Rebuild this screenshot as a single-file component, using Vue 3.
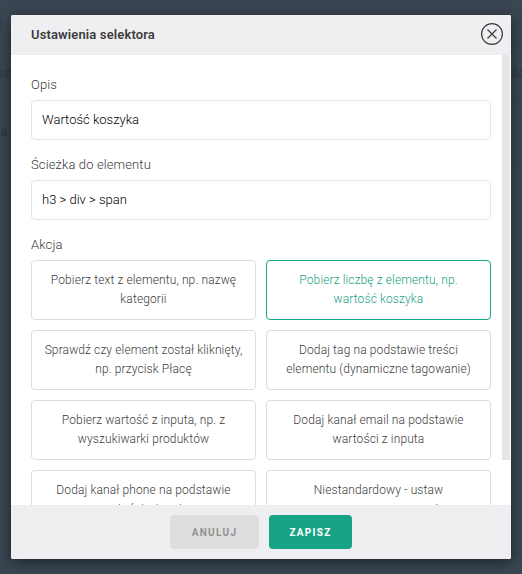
<script setup>
const options = [
  { text: 'Pobierz text z elementu, np. nazwę kategorii' },
  { text: 'Pobierz liczbę z elementu, np. wartość koszyka', active: true },
  { text: 'Sprawdź czy element został kliknięty, np. przycisk Płacę' },
  { text: 'Dodaj tag na podstawie treści elementu (dynamiczne tagowanie)' },
  { text: 'Pobierz wartość z inputa, np. z wyszukiwarki produktów' },
  { text: 'Dodaj kanał email na podstawie wartości z inputa' },
  { text: 'Dodaj kanał phone na podstawie wartości z inputa' },
  { text: 'Niestandardowy - ustaw zaawansowane parametry' },
]
</script>

<template>
  <div class="screen">
    <div class="page">
      <div class="row first"><b>n</b></div>
      <div class="row"><span class="cut">sc,</span><span>śc</span></div>
      <div class="row"><span>a</span></div>
    </div>
    <section class="modal">
      <header class="head">
        <h1>Ustawienia selektora</h1>
        <svg class="close" viewBox="0 0 24 24" width="24" height="24" fill="none" stroke="#3b3b3f" stroke-width="1.2">
          <circle cx="12" cy="12" r="10.4" />
          <path d="M7.5 7.5l9 9M16.5 7.5l-9 9" />
        </svg>
      </header>
      <div class="body">
        <div class="content">
          <label>Opis</label>
          <div class="field">Wartość koszyka</div>
          <label>Ścieżka do elementu</label>
          <div class="field">h3 &gt; div &gt; span</div>
          <label>Akcja</label>
          <div class="grid">
            <div v-for="o in options" :key="o.text" class="card" :class="{ active: o.active }">{{ o.text }}</div>
          </div>
        </div>
        <div class="track"><div class="thumb"></div></div>
      </div>
      <footer class="foot">
        <button class="btn cancel">ANULUJ</button>
        <button class="btn save">ZAPISZ</button>
      </footer>
    </section>
  </div>
</template>

<style>
body {
  margin: 0;
}
</style>

<style scoped>
.screen {
  position: relative;
  box-sizing: border-box;
  width: 522px;
  height: 574px;
  padding: 15px 11px;
  overflow: hidden;
  background: #3a4652;
  font-family: Roboto, sans-serif;
}
.page {
  position: absolute;
  inset: 0;
  color: #2a3644;
  font-size: 13px;
}
.row {
  display: flex;
  justify-content: space-between;
  align-items: center;
  box-sizing: border-box;
  height: 59px;
  border-bottom: 1px solid #36414d;
}
.row .cut {
  margin-left: -2px;
}
.row span:last-child:not(:first-child) {
  margin-right: -3px;
}
.first {
  height: 43px;
}
.first b {
  margin-left: -6px;
  color: #253b5c;
}
.modal {
  position: relative;
  display: flex;
  flex-direction: column;
  width: 500px;
  height: 544px;
  border-radius: 2px;
  overflow: hidden;
  background: #fff;
  box-shadow: 0 3px 14px rgba(0, 0, 0, 0.5);
}
.head {
  display: flex;
  align-items: center;
  justify-content: space-between;
  height: 40px;
  padding: 0 7px 0 20px;
  background: #efeff1;
}
h1 {
  margin: 0;
  font-size: 13px;
  line-height: 20px;
  font-weight: 600;
  letter-spacing: 0.13px;
  color: #3c3c3e;
}
.close {
  display: block;
  margin-top: -2px;
}
.body {
  display: flex;
  height: 450px;
  overflow: hidden;
}
.content {
  box-sizing: border-box;
  width: 491px;
  padding: 20px 11px 0 20px;
}
label {
  display: block;
  height: 25px;
  font-size: 13px;
  line-height: 20px;
  font-weight: 300;
  letter-spacing: 0.12px;
  color: #3c3c3c;
}
.field {
  box-sizing: border-box;
  height: 40px;
  margin-bottom: 15px;
  padding: 0 10px;
  border: 1px solid #e3e4e6;
  border-radius: 4px;
  font-size: 13px;
  line-height: 38px;
  font-weight: 300;
  color: #000;
}
.grid {
  display: grid;
  grid-template-columns: 225px 225px;
  grid-auto-rows: 60px;
  gap: 10px;
}
.card {
  box-sizing: border-box;
  padding: 10px 10px 0;
  border: 1px solid #dcdddd;
  border-radius: 4px;
  font-size: 12px;
  line-height: 19px;
  font-weight: 300;
  letter-spacing: 0.12px;
  text-align: center;
  color: #3c3c3c;
}
.card.active {
  border-color: #18a286;
  color: #18a286;
}
.track {
  width: 8px;
}
.thumb {
  height: 405px;
  background: #e5e5e5;
}
.foot {
  display: flex;
  justify-content: center;
  gap: 10px;
  box-sizing: border-box;
  height: 54px;
  padding-top: 10px;
  background: #efeff1;
}
.btn {
  height: 34px;
  padding: 0;
  border: 0;
  border-radius: 4px;
  font-family: inherit;
  font-size: 10px;
  font-weight: 700;
  letter-spacing: 1.3px;
}
.cancel {
  width: 89px;
  background: #dedede;
  color: #929292;
}
.save {
  width: 83px;
  background: #18a286;
  color: #fff;
}
</style>
